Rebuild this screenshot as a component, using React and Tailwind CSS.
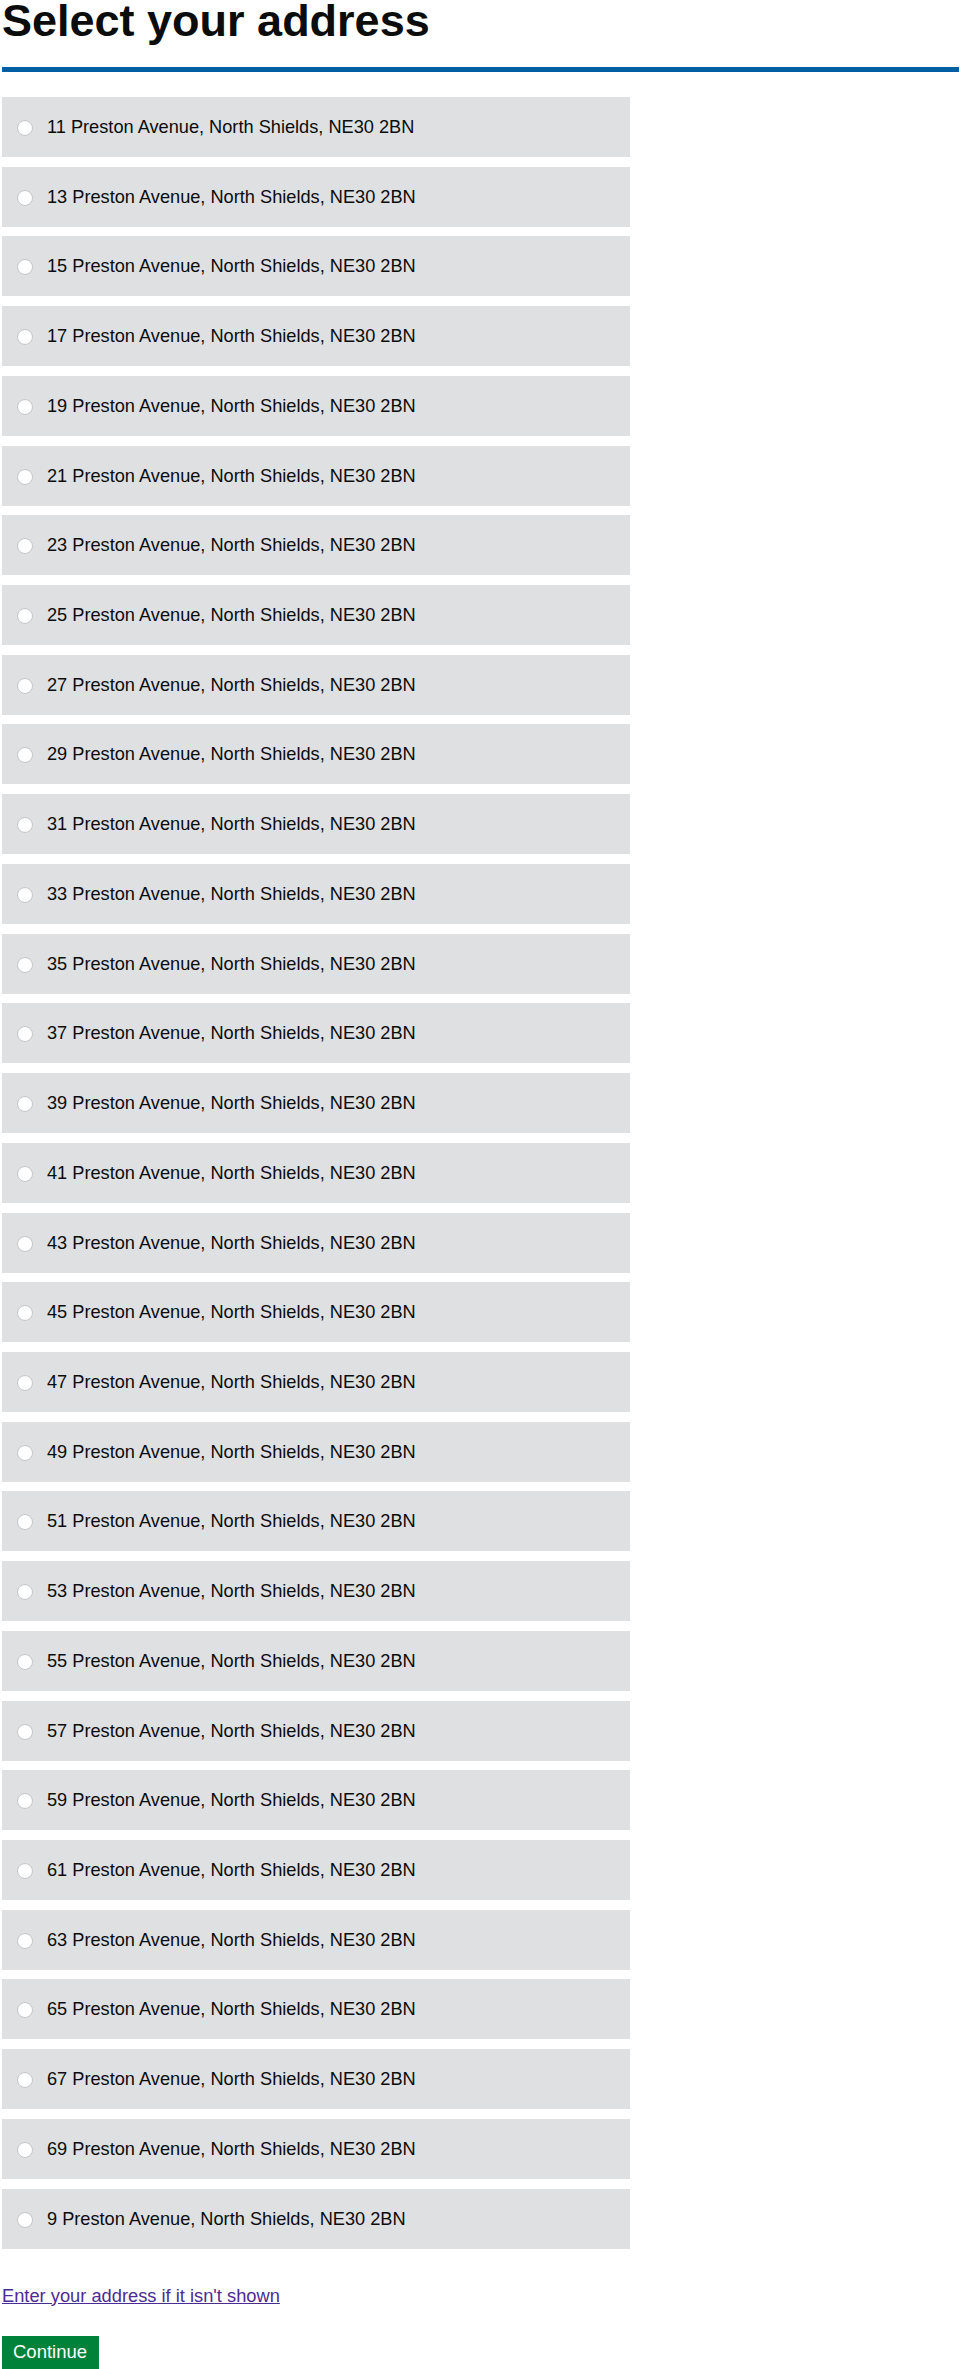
import React from 'react';

const numbers = [11, 13, 15, 17, 19, 21, 23, 25, 27, 29, 31, 33, 35, 37, 39, 41, 43, 45, 47, 49, 51, 53, 55, 57, 59, 61, 63, 65, 67, 69, 9];

const AddressRow = ({ address }) => (
  <label className="flex h-[60px] w-[628px] items-center bg-[#dee0e2] pl-[15px]">
    <span className="mt-[2px] h-[16px] w-[16px] shrink-0 rounded-full border border-[#c4c6c8] bg-white" />
    <span className="ml-[14px] text-[18.2px] leading-[20px] text-[#0b0c0c]">{address}</span>
  </label>
);

export default function App() {
  return (
    <div className="px-[2px] font-['Liberation_Sans',Arial,sans-serif] text-[#0b0c0c]">
      <h1 className="h-[41px] text-[45px] font-bold leading-[41px]">Select your address</h1>
      <div className="mt-[26px] h-[5px] w-[957px] bg-[#005ea5]" />

      <div className="mt-[25px] flex flex-col gap-[9.73px]">
        {numbers.map((n) => (
          <AddressRow key={n} address={`${n} Preston Avenue, North Shields, NE30 2BN`} />
        ))}
      </div>

      <div className="mt-[37px] text-[18.3px] leading-[20px]">
        <a href="#" className="text-[#4c2c92] underline">
          Enter your address if it isn't shown
        </a>
      </div>

      <button className="mt-[30px] block h-[38px] w-[97px] bg-[#00823b] pb-[12px] pl-[11px] pt-[6px] text-left text-[18.5px] leading-[20px] text-white">
        Continue
      </button>
    </div>
  );
}
